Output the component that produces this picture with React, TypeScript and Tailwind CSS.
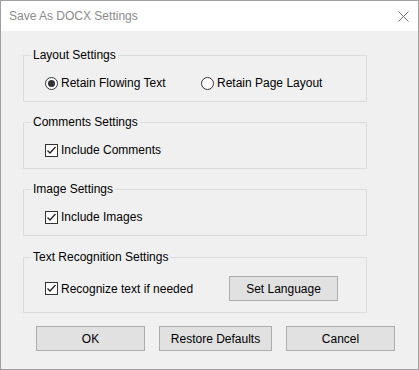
import React from 'react';

const font = { fontFamily: '"Liberation Sans", Arial, sans-serif' };

const GroupBox: React.FC<{ title: string; className?: string; children: React.ReactNode }> = ({
  title,
  className,
  children,
}) => (
  <div className={`relative mx-[22px] w-[344px] border border-[#dcdcdc] ${className ?? ''}`}>
    <span className="absolute -top-[9px] left-[7px] bg-[#f0f0f0] px-[2px] text-[12px] leading-[16px] text-black">
      {title}
    </span>
    {children}
  </div>
);

const Radio: React.FC<{ checked?: boolean; label: string }> = ({ checked, label }) => (
  <label className="flex items-center gap-[3px] text-[12px] leading-[16px] text-black">
    <span className="flex h-[13px] w-[13px] items-center justify-center rounded-full border border-[#333] bg-white">
      {checked && <span className="h-[7px] w-[7px] rounded-full bg-[#333]" />}
    </span>
    {label}
  </label>
);

const Checkbox: React.FC<{ label: string }> = ({ label }) => (
  <label className="flex items-center gap-[3px] text-[12px] leading-[16px] text-black">
    <span className="flex h-[13px] w-[13px] items-center justify-center border border-[#333] bg-white">
      <svg width="11" height="11" viewBox="0 0 11 11" fill="none">
        <path d="M1.5 5.5 L4 8 L9.5 2" stroke="#222" strokeWidth="1.3" />
      </svg>
    </span>
    {label}
  </label>
);

const Button: React.FC<{ label: string; className?: string }> = ({ label, className }) => (
  <button
    className={`flex h-[25px] items-center justify-center border border-[#adadad] bg-[#e1e1e1] text-[12px] text-black ${className ?? ''}`}
  >
    {label}
  </button>
);

export default function App() {
  return (
    <div style={font} className="h-[370px] w-[419px] bg-white">
      <div className="flex h-[370px] w-[419px] flex-col border border-[#a0a0a0] bg-[#f0f0f0]">
        {/* Title bar */}
        <div className="flex h-[30px] items-center justify-between bg-white pl-[8px] pr-[9px]">
          <span className="text-[12px] text-[#8a8a8a]">Save As DOCX Settings</span>
          <svg width="11" height="11" viewBox="0 0 11 11">
            <path d="M0.5 0.5 L10.5 10.5 M10.5 0.5 L0.5 10.5" stroke="#777" strokeWidth="1" />
          </svg>
        </div>

        <GroupBox title="Layout Settings" className="mt-[24px] h-[47px]">
          <div className="mt-[19px] flex pl-[21px]">
            <div className="w-[156px]">
              <Radio checked label="Retain Flowing Text" />
            </div>
            <Radio label="Retain Page Layout" />
          </div>
        </GroupBox>

        <GroupBox title="Comments Settings" className="mt-[20px] h-[47px]">
          <div className="mt-[19px] pl-[21px]">
            <Checkbox label="Include Comments" />
          </div>
        </GroupBox>

        <GroupBox title="Image Settings" className="mt-[20px] h-[47px]">
          <div className="mt-[19px] pl-[21px]">
            <Checkbox label="Include Images" />
          </div>
        </GroupBox>

        <GroupBox title="Text Recognition Settings" className="mt-[21px] h-[56px]">
          <div className="mt-[18px] flex items-center pl-[21px]">
            <div className="w-[184px]">
              <Checkbox label="Recognize text if needed" />
            </div>
            <Button label="Set Language" className="w-[109px]" />
          </div>
        </GroupBox>

        <div className="mt-[13px] flex gap-[14px] pl-[35px]">
          <Button label="OK" className="w-[109px]" />
          <Button label="Restore Defaults" className="w-[113px]" />
          <Button label="Cancel" className="w-[109px]" />
        </div>
      </div>
    </div>
  );
}
